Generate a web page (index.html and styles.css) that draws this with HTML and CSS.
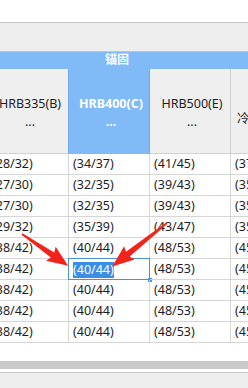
FILE: index.html
```html
<!DOCTYPE html>
<html lang="zh-CN">
<head>
    <meta charset="UTF-8">
    <meta name="viewport" content="width=device-width, initial-scale=1.0">
    <title>锚固长度</title>
    <link rel="stylesheet" href="styles.css">
</head>
<body>
    <div class="page">
        <div class="topbar"></div>
        <div class="toolbar"></div>
        <div class="group">锚固</div>

        <div class="grid">
            <div class="head">HRB335(B)<br>...</div>
            <div class="head active">HRB400(C)<br>...</div>
            <div class="head">HRB500(E)<br>...</div>
            <div class="head side">冷轧带肋钢筋</div>

            <div class="cell">(28/32)</div><div class="cell">(34/37)</div><div class="cell">(41/45)</div><div class="cell">(37/41)</div>
            <div class="cell">(27/30)</div><div class="cell">(32/35)</div><div class="cell">(39/43)</div><div class="cell">(35/39)</div>
            <div class="cell">(27/30)</div><div class="cell">(32/35)</div><div class="cell">(39/43)</div><div class="cell">(35/39)</div>
            <div class="cell">(29/32)</div><div class="cell">(35/39)</div><div class="cell">(43/47)</div><div class="cell">(35/39)</div>
            <div class="cell">(38/42)</div><div class="cell">(40/44)</div><div class="cell">(48/53)</div><div class="cell">(45/49)</div>
            <div class="cell">(38/42)</div><div class="cell selected"><span class="pick">(40/44)</span><i class="handle"></i></div><div class="cell">(48/53)</div><div class="cell">(45/49)</div>
            <div class="cell">(38/42)</div><div class="cell">(40/44)</div><div class="cell">(48/53)</div><div class="cell">(45/49)</div>
            <div class="cell">(38/42)</div><div class="cell">(40/44)</div><div class="cell">(48/53)</div><div class="cell">(45/49)</div>
            <div class="cell">(38/42)</div><div class="cell">(40/44)</div><div class="cell">(48/53)</div><div class="cell">(45/49)</div>
        </div>

        <div class="spacer"></div>
        <div class="scrollbar"></div>
        <div class="gap"></div>
        <div class="footer"></div>

        <!-- red callout arrows pointing at the edited cell -->
        <svg class="arrows" width="248" height="388" viewBox="0 0 248 388">
            <g fill="#f2231b">
                <polygon transform="translate(22 234) rotate(34.4)" points="0,-0.8 37,-3 35,-8.5 56,0 35,8.5 37,3 0,0.8"/>
                <polygon transform="translate(167 223) rotate(141.5)" points="0,-0.8 50,-3 48,-8.5 70,0 48,8.5 50,3 0,0.8"/>
            </g>
        </svg>
    </div>
</body>
</html>
```

FILE: styles.css
```css
body {
    margin: 0;
    padding: 0;
    background-color: #fff;
    font-family: "Noto Sans", "Noto Sans CJK SC", sans-serif;
    font-size: 12px;
    color: #1e1e1e;
}

.page {
    position: relative;
    width: 248px;
    height: 388px;
    overflow: hidden;
}

.topbar {
    height: 22px;
}

.toolbar {
    height: 28px;
    background-color: #eeeeee;
    border-top: 1px solid #c6c6c6;
    border-bottom: 1px solid #c4c4c4;
}

.group {
    height: 17px;
    line-height: 16px;
    padding-right: 14px;
    background-color: #80bbf8;
    color: #fff;
    font-weight: bold;
    text-align: center;
}

.grid {
    display: grid;
    grid-template-columns: repeat(4, 81px);
    margin-left: -12px;
}

.head {
    box-sizing: border-box;
    height: 85px;
    display: flex;
    align-items: center;
    justify-content: center;
    text-align: center;
    line-height: 18px;
    padding-left: 4px;
    padding-top: 3px;
    font-size: 12.5px;
    background-color: #efefef;
    border-right: 1px solid #d2d2d2;
    border-bottom: 1px solid #d2d2d2;
    white-space: nowrap;
}

.head:first-child {
    border-right-color: #72aaea;
}

.head.active {
    background-color: #80bbf8;
    color: #fff;
    font-weight: bold;
    border-right-color: #72aaea;
    border-bottom-color: #80bbf8;
}

.head.side {
    justify-content: flex-start;
    padding-left: 6px;
    padding-top: 16px;
    overflow: hidden;
}

.cell {
    position: relative;
    box-sizing: border-box;
    height: 21px;
    line-height: 20px;
    padding-left: 4px;
    font-size: 12.5px;
    border-right: 1px solid #d6d6d6;
    border-bottom: 1px solid #d6d6d6;
    white-space: nowrap;
}

.cell.selected {
    margin-left: -1px;
    margin-top: -1px;
    height: 22px;
    padding-left: 4px;
    padding-top: 1px;
    border: 1px solid #4a90dc;
}

.pick {
    display: inline-block;
    line-height: 16px;
    background-color: #3a8ee6;
    color: #fff;
}

.handle {
    position: absolute;
    right: -3px;
    bottom: -3px;
    width: 4px;
    height: 4px;
    background-color: #4a90dc;
}

.spacer {
    height: 18px;
}

.scrollbar {
    height: 8px;
    background-color: #cacaca;
}

.gap {
    height: 3px;
}

.footer {
    height: 16px;
    background-color: #eeeeee;
    border-top: 1px solid #c6c6c6;
}

.arrows {
    position: absolute;
    left: 0;
    top: 0;
}
```
